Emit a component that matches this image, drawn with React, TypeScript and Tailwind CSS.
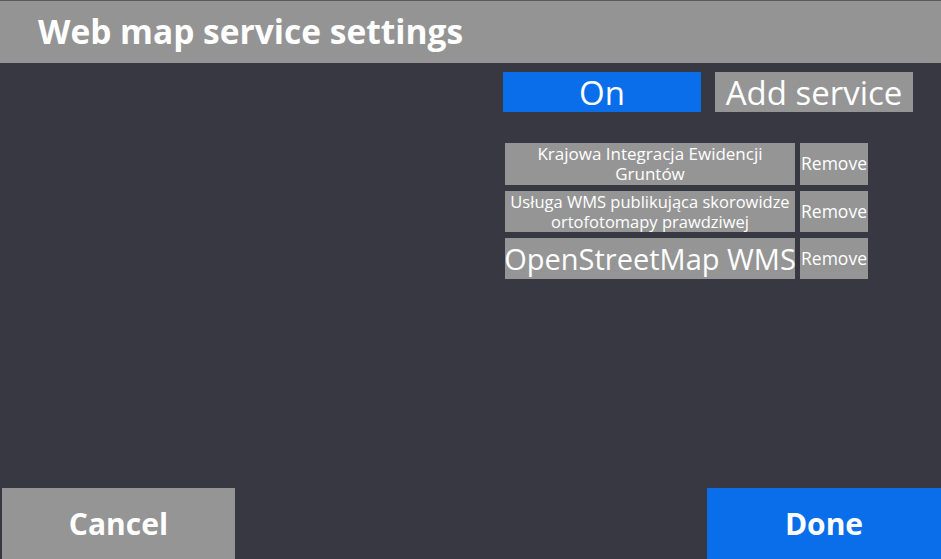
import React from "react";

const services = [
  { lines: ["Krajowa Integracja Ewidencji", "Gruntów"], size: "text-[17px] leading-[20px]", h: "h-[42px]" },
  { lines: ["Usługa WMS publikująca skorowidze", "ortofotomapy prawdziwej"], size: "text-[16.5px] leading-[20px]", h: "h-[41px]" },
  { lines: ["OpenStreetMap WMS"], size: "text-[29px] leading-[32px]", h: "h-[41px]" },
];

export default function App() {
  return (
    <div
      className="flex h-[559px] w-[941px] flex-col overflow-hidden bg-[#383842] text-white"
      style={{ fontFamily: '"Open Sans", "Noto Sans", sans-serif' }}
    >
      <header className="flex h-[63px] shrink-0 items-center border-t border-[#5a5a5e] bg-[#949494] pl-[38px]">
        <h1 className="text-[33.5px] font-bold leading-none">Web map service settings</h1>
      </header>

      <main className="flex flex-1 flex-col pl-[503px] pt-[9px]">
        <div className="flex gap-[14px]">
          <button className="flex h-[40px] w-[198px] items-center justify-center bg-[#0a6eea] text-[33px] leading-none">
            On
          </button>
          <button className="flex h-[40px] w-[198px] items-center justify-center bg-[#959595] text-[33px] leading-none">
            Add service
          </button>
        </div>

        <ul className="mt-[31px] flex flex-col gap-[6px] pl-[2px]">
          {services.map((s) => (
            <li key={s.lines[0]} className={`flex gap-[5px] ${s.h}`}>
              <div className="flex w-[290px] items-center justify-center bg-[#959595]">
                <p className={`whitespace-nowrap text-center ${s.size}`}>
                  {s.lines.map((l, i) => (
                    <React.Fragment key={l}>
                      {i > 0 && <br />}
                      {l}
                    </React.Fragment>
                  ))}
                </p>
              </div>
              <button className="flex w-[68px] items-center justify-center bg-[#959595] text-[17.5px] leading-none">
                Remove
              </button>
            </li>
          ))}
        </ul>
      </main>

      <footer className="flex h-[71px] shrink-0 items-stretch justify-between pl-[2px]">
        <button className="flex w-[233px] items-center justify-center bg-[#959595] text-[30px] font-bold">
          Cancel
        </button>
        <button className="flex w-[234px] items-center justify-center bg-[#0a6eea] text-[30px] font-bold">
          Done
        </button>
      </footer>
    </div>
  );
}
